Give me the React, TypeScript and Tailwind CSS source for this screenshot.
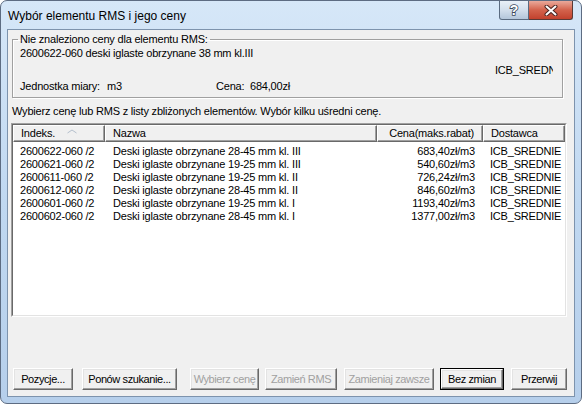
const rows = [
  ["2600622-060 /2", "Deski iglaste obrzynane 28-45 mm kl. III", "683,40zł/m3", "ICB_SREDNIE"],
  ["2600621-060 /2", "Deski iglaste obrzynane 19-25 mm kl. III", "540,60zł/m3", "ICB_SREDNIE"],
  ["2600611-060 /2", "Deski iglaste obrzynane 19-25 mm kl. II", "726,24zł/m3", "ICB_SREDNIE"],
  ["2600612-060 /2", "Deski iglaste obrzynane 28-45 mm kl. II", "846,60zł/m3", "ICB_SREDNIE"],
  ["2600601-060 /2", "Deski iglaste obrzynane 19-25 mm kl. I", "1193,40zł/m3", "ICB_SREDNIE"],
  ["2600602-060 /2", "Deski iglaste obrzynane 28-45 mm kl. I", "1377,00zł/m3", "ICB_SREDNIE"],
];

function Btn({ label, w, ml, disabled, isDefault }: { label: string; w: string; ml: string; disabled?: boolean; isDefault?: boolean }) {
  return (
    <div className={`${w} ${ml} h-[22px] ${isDefault ? "border border-black" : ""}`}>
      <div
        className={`h-full flex items-center justify-center whitespace-nowrap tracking-[-0.4px] bg-[#f0f0f0] border border-t-white border-l-white border-r-[#696969] border-b-[#696969] shadow-[inset_-1px_-1px_0_#a0a0a0,inset_1px_1px_0_#e3e3e3] ${
          disabled ? "text-[#a0a0a0]" : "text-black"
        }`}
      >
        {label}
      </div>
    </div>
  );
}

function HeadCell({ w, children, right }: { w: string; children: React.ReactNode; right?: boolean }) {
  return (
    <div
      className={`${w} h-full flex items-center ${right ? "justify-end pr-[8px]" : "pl-[7px]"} border-t border-l border-t-white border-l-white border-r border-b border-r-[#696969] border-b-[#696969] shadow-[inset_-1px_-1px_0_#a0a0a0] bg-[#f0f0f0]`}
    >
      {children}
    </div>
  );
}

export default function App() {
  return (
    <div className="w-[582px] h-[404px] rounded-[7px] border border-[#5d6c82] bg-gradient-to-b from-[#d6e7f8] via-[#c0d8f1] to-[#b6cfeb] flex flex-col overflow-hidden font-['Liberation_Sans',sans-serif] text-[11px] leading-[13px] tracking-[-0.2px] text-black">
      {/* title bar */}
      <div className="h-[28px] flex items-start shrink-0">
        <div className="mt-[8px] ml-[7px] text-[12px] leading-[15px] tracking-normal text-black">Wybór elementu RMS i jego ceny</div>
        <div className="ml-auto mr-[8px] flex">
          <div className="w-[30px] h-[19px] rounded-bl-[3px] border border-t-0 border-[#5a6b80] bg-gradient-to-b from-[#e9f0f7] via-[#d3dfec] to-[#b4c6da] flex items-center justify-center">
            <svg width="12" height="14" viewBox="0 0 12 14">
              <text x="6" y="12" textAnchor="middle" fontFamily="Liberation Sans, sans-serif" fontWeight="bold" fontSize="14" fill="#fff" stroke="#3c4a5c" strokeWidth="1.6" paintOrder="stroke">?</text>
            </svg>
          </div>
          <div className="w-[44px] h-[19px] rounded-br-[3px] border border-t-0 border-l-0 border-[#5a3a36] bg-gradient-to-b from-[#e9a99b] via-[#d3624c] to-[#c2412d] flex items-center justify-center">
            <svg width="14" height="11" viewBox="0 0 14 11">
              <path d="M2.5 1.5 L11.5 9.5 M11.5 1.5 L2.5 9.5" stroke="#4a2420" strokeWidth="4" strokeLinecap="round" />
              <path d="M2.5 1.5 L11.5 9.5 M11.5 1.5 L2.5 9.5" stroke="#fff" strokeWidth="2" strokeLinecap="round" />
            </svg>
          </div>
        </div>
      </div>

      {/* client */}
      <div className="mx-[6px] mb-[6px] flex-1 border border-[#7d93ad] bg-[#f0f0f0] flex flex-col">
        <fieldset className="ml-[4px] mt-[3px] w-[551px] border border-[#a0a0a0] shadow-[1px_1px_0_#fff,inset_1px_1px_0_#fff] px-[7px] pb-[4px]">
          <legend className="ml-[-2px] px-[2px] leading-[13px]">Nie znaleziono ceny dla elementu RMS:</legend>
          <div className="mt-[1px]">2600622-060 deski iglaste obrzynane 38 mm kl.III</div>
          <div className="mt-[4px] flex">
            <div className="ml-auto mr-[2px] w-[58px] overflow-hidden whitespace-nowrap">ICB_SREDNIE</div>
          </div>
          <div className="mt-[3px] flex">
            <span className="w-[87px]">Jednostka miary:</span>
            <span className="w-[109px]">m3</span>
            <span className="w-[34px]">Cena:</span>
            <span>684,00zł</span>
          </div>
        </fieldset>

        <div className="ml-[4px] mt-[7px]">Wybierz cenę lub RMS z listy zbliżonych elementów. Wybór kilku uśredni cenę.</div>

        <div className="ml-[3px] mt-[5px] w-[556px] h-[194px] border border-t-[#a0a0a0] border-l-[#a0a0a0] border-r-white border-b-white">
          <div className="h-full bg-white border border-t-[#696969] border-l-[#696969] border-r-[#e3e3e3] border-b-[#e3e3e3] flex flex-col">
            <div className="h-[17px] flex shrink-0">
              <HeadCell w="w-[92px]">
                <span>Indeks.</span>
                <svg className="ml-[12px] mt-[-4px]" width="10" height="5" viewBox="0 0 10 5">
                  <polyline points="0.5,4 5,1 9.5,4" fill="none" stroke="#b4bfcc" strokeWidth="1" />
                </svg>
              </HeadCell>
              <HeadCell w="w-[272px]">Nazwa</HeadCell>
              <HeadCell w="w-[106px]" right>Cena(maks.rabat)</HeadCell>
              <HeadCell w="w-[82px]">Dostawca</HeadCell>
            </div>
            <div className="pt-[3px]">
              {rows.map((r) => (
                <div key={r[0] + r[1]} className="h-[13px] flex whitespace-nowrap">
                  <div className="w-[92px] pl-[7px]">{r[0]}</div>
                  <div className="w-[272px] pl-[8px]">{r[1]}</div>
                  <div className="w-[106px] pr-[8px] text-right">{r[2]}</div>
                  <div className="w-[82px] pl-[7px] overflow-hidden">{r[3]}</div>
                </div>
              ))}
            </div>
          </div>
        </div>

        <div className="mt-[51px] flex">
          <Btn label="Pozycje..." w="w-[60px]" ml="ml-[5px]" />
          <Btn label="Ponów szukanie..." w="w-[95px]" ml="ml-[9px]" />
          <Btn label="Wybierz cenę" w="w-[69px]" ml="ml-[13px]" disabled />
          <Btn label="Zamień RMS" w="w-[72px]" ml="ml-[6px]" disabled />
          <Btn label="Zamieniaj zawsze" w="w-[90px]" ml="ml-[7px]" disabled />
          <Btn label="Bez zmian" w="w-[64px]" ml="ml-[6px]" isDefault />
          <Btn label="Przerwij" w="w-[56px]" ml="ml-[7px]" />
        </div>
      </div>
    </div>
  );
}
